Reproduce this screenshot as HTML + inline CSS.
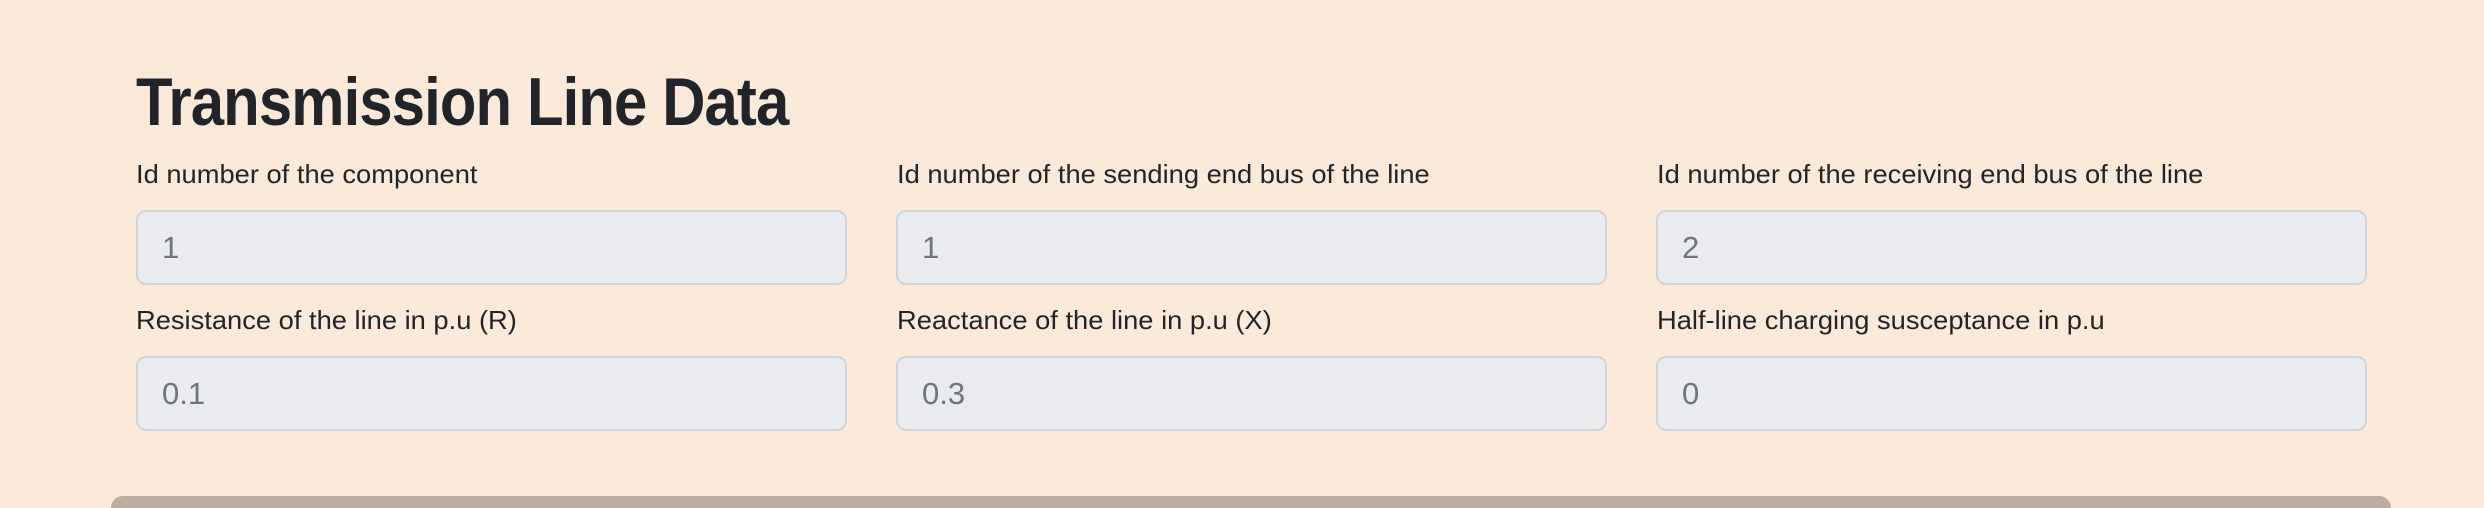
<!DOCTYPE html>
<html><head><meta charset="utf-8"><style>
html,body{margin:0;padding:0;overflow:hidden}
body{width:2484px;height:508px;background:#fbe9d9;position:relative;overflow:hidden;font-family:"Liberation Sans",sans-serif;color:#212529}
h1{position:absolute;left:136px;top:62px;margin:0;font-size:68px;font-weight:700;line-height:80px;white-space:nowrap;transform-origin:0 0;transform:scaleX(0.88);letter-spacing:-1px}
.l{position:absolute;font-size:26px;line-height:30px;white-space:nowrap;transform-origin:0 0;transform:scaleX(1.05)}
.i{position:absolute;background:#e9ebef;border:2px solid #cfd4da;border-radius:10px;box-sizing:border-box;width:711px;height:75px;color:#6c757d;font-size:31px;line-height:71px;padding-left:24px}
.bar{position:absolute;left:111px;top:496px;width:2280px;height:12px;background:#bbaea0;border-radius:14px 14px 0 0}
</style></head><body>
<h1>Transmission Line Data</h1>
<div class="l" style="left:136px;top:159px">Id number of the component</div>
<div class="l" style="left:897px;top:159px">Id number of the sending end bus of the line</div>
<div class="l" style="left:1657px;top:159px">Id number of the receiving end bus of the line</div>
<div class="i" style="left:136px;top:210px">1</div>
<div class="i" style="left:896px;top:210px">1</div>
<div class="i" style="left:1656px;top:210px">2</div>
<div class="l" style="left:136px;top:305px">Resistance of the line in p.u (R)</div>
<div class="l" style="left:897px;top:305px">Reactance of the line in p.u (X)</div>
<div class="l" style="left:1657px;top:305px">Half-line charging susceptance in p.u</div>
<div class="i" style="left:136px;top:356px">0.1</div>
<div class="i" style="left:896px;top:356px">0.3</div>
<div class="i" style="left:1656px;top:356px">0</div>
<div class="bar"></div>
</body></html>
